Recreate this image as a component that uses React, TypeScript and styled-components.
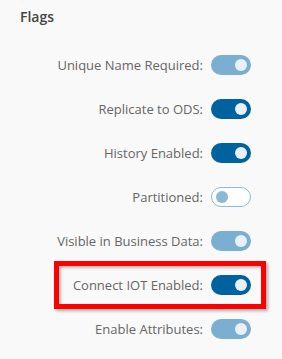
import React from "react";
import styled, { createGlobalStyle } from "styled-components";

const Global = createGlobalStyle`
  html, body { margin: 0; padding: 0; background: #f9f9f9; }
  body { font-family: "Open Sans", "Liberation Sans", sans-serif; }
`;

const Panel = styled.div`
  width: 282px;
  height: 359px;
  background: #f9f9f9;
  box-sizing: border-box;
  display: flex;
  flex-direction: column;
`;

const Title = styled.div`
  height: 43px;
  box-sizing: border-box;
  padding: 7px 0 0 20px;
  font-size: 14px;
  font-weight: 600;
  color: #444;
  line-height: 20px;
`;

const Row = styled.div`
  position: relative;
  height: 44px;
  display: flex;
  align-items: center;
  justify-content: flex-end;
  gap: 8px;
  padding-right: 31px;
`;

const Label = styled.span`
  font-size: 13px;
  color: #666;
  line-height: 18px;
`;

type Variant = "light" | "dark" | "off";

const Track = styled.div<{ $v: Variant }>`
  width: 40px;
  height: 20px;
  box-sizing: border-box;
  border-radius: 10px;
  display: flex;
  align-items: center;
  justify-content: ${(p) => (p.$v === "off" ? "flex-start" : "flex-end")};
  padding: 0 4px;
  background: ${(p) =>
    p.$v === "dark" ? "#0063a0" : p.$v === "light" ? "#7bafd2" : "#ffffff"};
  border: ${(p) => (p.$v === "off" ? "1px solid #8dbad8" : "none")};
`;

const Knob = styled.div<{ $v: Variant }>`
  width: 12px;
  height: 12px;
  border-radius: 50%;
  background: ${(p) => (p.$v === "off" ? "#8bb8d6" : "#e9f0f7")};
`;

const Highlight = styled.div`
  position: absolute;
  left: 54px;
  right: 16px;
  top: -2px;
  bottom: -2px;
  border: 5px solid #ff0000;
  box-shadow: 2px 2px 3px rgba(0, 0, 0, 0.3), inset 2px 2px 3px rgba(0, 0, 0, 0.25);
  pointer-events: none;
`;

const rows: { label: string; v: Variant; hl?: boolean }[] = [
  { label: "Unique Name Required:", v: "light" },
  { label: "Replicate to ODS:", v: "dark" },
  { label: "History Enabled:", v: "dark" },
  { label: "Partitioned:", v: "off" },
  { label: "Visible in Business Data:", v: "light" },
  { label: "Connect IOT Enabled:", v: "dark", hl: true },
  { label: "Enable Attributes:", v: "light" },
];

export default function App() {
  return (
    <Panel>
      <Global />
      <Title>Flags</Title>
      {rows.map((r) => (
        <Row key={r.label}>
          {r.hl && <Highlight />}
          <Label>{r.label}</Label>
          <Track $v={r.v}>
            <Knob $v={r.v} />
          </Track>
        </Row>
      ))}
    </Panel>
  );
}
